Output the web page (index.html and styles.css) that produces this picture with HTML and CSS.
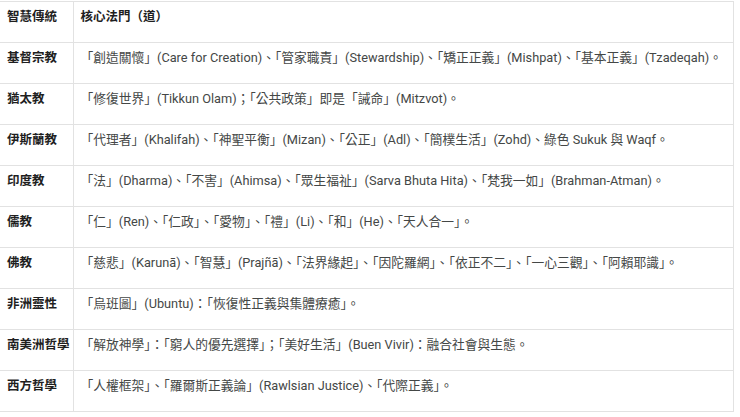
FILE: index.html
```html
<!DOCTYPE html>
<html lang="zh-Hant">
<head>
<meta charset="utf-8">
<link rel="stylesheet" href="styles.css">
</head>
<body>
<table class="wisdom">
  <thead>
    <tr><th class="name">智慧傳統</th><th class="desc">核心法門（道）</th></tr>
  </thead>
  <tbody>
    <tr><td class="name">基督宗教</td><td class="desc">「創造關懷」(Care for Creation)、「管家職責」(Stewardship)、「矯正正義」(Mishpat)、「基本正義」(Tzadeqah)。</td></tr>
    <tr><td class="name">猶太教</td><td class="desc">「修復世界」(Tikkun Olam)；「公共政策」即是「誡命」(Mitzvot)。</td></tr>
    <tr><td class="name">伊斯蘭教</td><td class="desc">「代理者」(Khalifah)、「神聖平衡」(Mizan)、「公正」(Adl)、「簡樸生活」(Zohd)、綠色 Sukuk 與 Waqf。</td></tr>
    <tr><td class="name">印度教</td><td class="desc">「法」(Dharma)、「不害」(Ahimsa)、「眾生福祉」(Sarva Bhuta Hita)、「梵我一如」(Brahman-Atman)。</td></tr>
    <tr><td class="name">儒教</td><td class="desc">「仁」(Ren)、「仁政」、「愛物」、「禮」(Li)、「和」(He)、「天人合一」。</td></tr>
    <tr><td class="name">佛教</td><td class="desc">「慈悲」(Karunā)、「智慧」(Prajñā)、「法界緣起」、「因陀羅網」、「依正不二」、「一心三觀」、「阿賴耶識」。</td></tr>
    <tr><td class="name">非洲靈性</td><td class="desc">「烏班圖」(Ubuntu)：「恢復性正義與集體療癒」。</td></tr>
    <tr><td class="name">南美洲哲學</td><td class="desc">「解放神學」：「窮人的優先選擇」；「美好生活」(Buen Vivir)：融合社會與生態。</td></tr>
    <tr><td class="name">西方哲學</td><td class="desc">「人權框架」、「羅爾斯正義論」(Rawlsian Justice)、「代際正義」。</td></tr>
  </tbody>
</table>
</body>
</html>
```
FILE: styles.css
```css
html, body {
  margin: 0;
  padding: 0;
  background: #ffffff;
}
body {
  font-family: Roboto, "Noto Sans CJK TC", sans-serif;
  font-size: 12.5px;
  color: #1f1f1f;
}
.wisdom {
  border-collapse: collapse;
  margin: 1px 0 0 -1px;
  width: 735px;
}
.wisdom th,
.wisdom td {
  border: 1px solid #e2e2e2;
  padding: 5px 7px 15px 7px;
  line-height: 20px;
  text-align: left;
  vertical-align: top;
  white-space: nowrap;
}
.wisdom .name {
  width: 62px;
  padding-right: 3px;
  font-weight: 700;
  color: #1f1f1f;
}
.wisdom th.desc {
  font-weight: 700;
  color: #1f1f1f;
}
.wisdom td.desc {
  font-size: 12.75px;
  font-weight: 400;
  color: #444746;
}
```
